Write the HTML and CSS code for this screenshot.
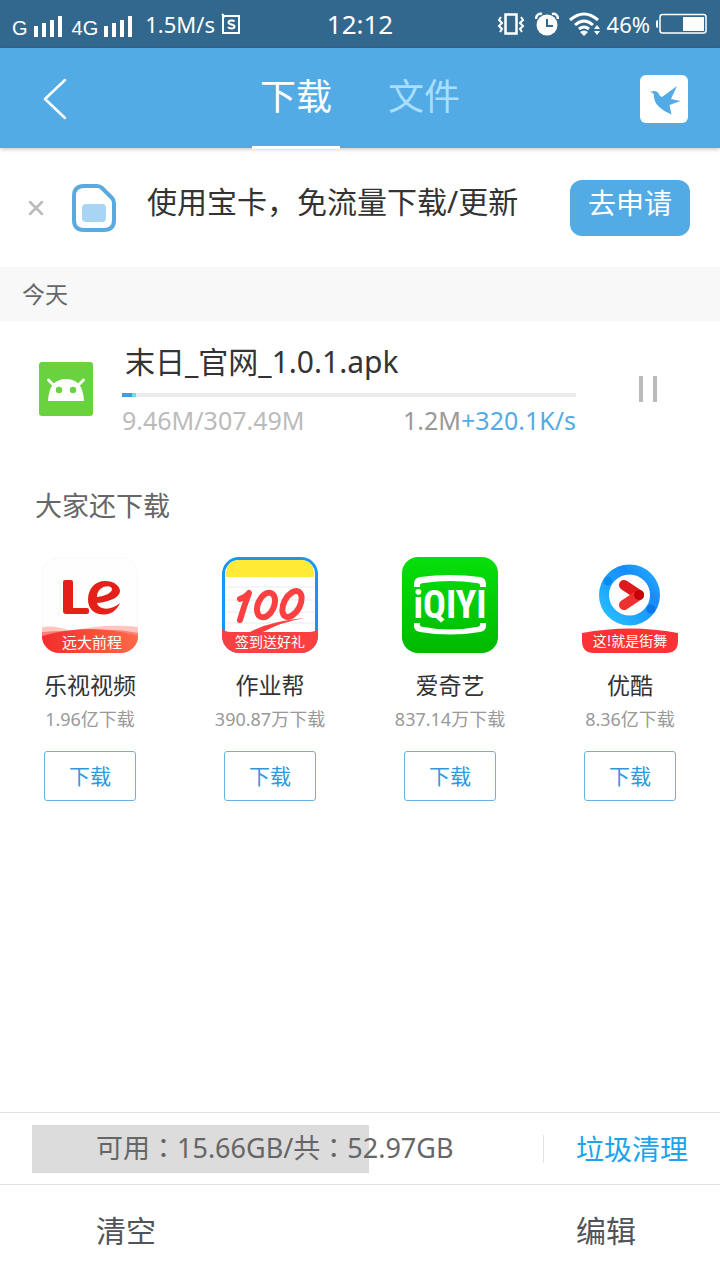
FILE: index.html
```html
<!DOCTYPE html>
<html lang="zh-CN">
<head>
<meta charset="utf-8">
<meta name="viewport" content="width=device-width, initial-scale=1">
<title>下载</title>
<link rel="stylesheet" href="styles.css">
</head>
<body>
<div class="status">
  <div class="status-left">
    <span class="net">G</span>
    <svg class="bars" width="28" height="21" viewBox="0 0 28 21" fill="#fff"><path d="M0 10h4v11H0zM8 7h4v14H8zM16 4h4v17h-4zM24 0h4v21h-4z"/></svg>
    <span class="net net-second">4G</span>
    <svg class="bars" width="28" height="21" viewBox="0 0 28 21" fill="#fff"><path d="M0 10h4v11H0zM8 7h4v14H8zM16 4h4v17h-4zM24 0h4v21h-4z"/></svg>
    <span class="rate">1.5M/s</span>
    <svg width="20" height="22" viewBox="0 0 20 22" fill="none" stroke="#fff" stroke-width="2"><path d="M2 3h16v17H2z"/><path d="M1 1l3 3"/><path d="M13.500 8.500c-1-1.500-6-1.500-6 1s6 1.500 6 4-5 2.500-6.500.5"/></svg>
  </div>
  <time class="clock">12:12</time>
  <div class="status-right">
    <svg width="28" height="24" viewBox="0 0 28 24" fill="none" stroke="#fff" stroke-width="2"><path d="M8.500 2.500h11v19h-11z" stroke-width="2.500"/><path d="M4 5L2 8l3 3-3 3 3 3-2 3M24 5l2 3-3 3 3 3-3 3 2 3"/></svg>
    <svg width="24" height="24" viewBox="0 0 24 24"><circle cx="12" cy="13" r="10.500" fill="#fff"/><path d="M1 7C1 3 4 1 7 2M23 7c0-4-3-6-6-5" fill="none" stroke="#fff" stroke-width="2.500"/><path d="M12 7v7h6" fill="none" stroke="#33688e" stroke-width="2"/></svg>
    <svg width="32" height="24" viewBox="0 0 32 24" fill="none" stroke="#fff" stroke-width="3"><path d="M1 8q14-12 28 0M6 13q9-8 18 0M10 17q5-4 10 0"/><path d="M11 20q4-3 8 0l-4 4zM25 17l3-4 3 4zM25 19l3 4 3-4z" fill="#fff" stroke="none"/></svg>
    <span class="percent">46%</span>
    <svg width="52" height="22" viewBox="0 0 52 22"><rect x="4" y="1.500" width="46" height="18.500" rx="2.500" fill="none" stroke="#fff" stroke-width="1.500"/><path d="M27 4h21v14H27zM0 9q0-2 2-2v8q-2 0-2-2z" fill="#fff"/></svg>
  </div>
</div>

<header class="header">
  <button class="back" aria-label="返回"><svg width="24" height="42" viewBox="0 0 24 42" fill="none" stroke="#fff" stroke-width="2.500" stroke-linecap="round" stroke-linejoin="round"><path d="M22 2L2 21l20 19"/></svg></button>
  <nav class="tabs">
    <a class="tab tab-active" href="#downloads" aria-current="page">下载</a>
    <a class="tab" href="#files">文件</a>
  </nav>
  <button class="bird" aria-label="传输"><svg width="48" height="48" viewBox="0 0 48 48"><path fill="#52abe5" d="M9.500 17l4.500-1q4 0 6 5l2 1 15-11-6 13 9.500 2-11 4 2 9.500Q21 35 16.500 29 13.500 24 14 20q-1-3-4.500-3z"/></svg></button>
</header>

<main class="main" id="downloads">
  <section class="promo">
    <button class="close" aria-label="关闭"><svg width="16" height="16" viewBox="0 0 16 16" stroke="#bbb" stroke-width="2.500" stroke-linecap="round"><path d="M2 2l12 12M14 2L2 14"/></svg></button>
    <svg class="sim" width="44" height="48" viewBox="0 0 44 48"><path d="M12 2h13q3 0 5 2l10 10q2 2 2 5v17q0 10-10 10H12Q2 46 2 36V12Q2 2 12 2z" fill="none" stroke="#5aaae0" stroke-width="4"/><rect x="10" y="20" width="24" height="18" rx="4" fill="#a9d5f5"/></svg>
    <p class="promo-text">使用宝卡，免流量下载/更新</p>
    <button class="apply">去申请</button>
  </section>

  <h2 class="day">今天</h2>

  <article class="task">
    <svg class="apk" width="54" height="54" viewBox="0 0 54 54"><rect width="54" height="54" rx="3" fill="#69d33f"/><path d="M9 39q1-22 18-22t18 22z" fill="#fff"/><path d="M9.500 18l6 6M44.500 18l-6 6" stroke="#fff" stroke-width="3" stroke-linecap="round"/><circle cx="20" cy="28" r="3.200" fill="#69d33f"/><circle cx="34" cy="28" r="3.200" fill="#69d33f"/></svg>
    <div class="task-body">
      <h3 class="file">末日_官网_1.0.1.apk</h3>
      <div class="track" role="progressbar" aria-valuenow="3" aria-valuemin="0" aria-valuemax="100" aria-label="下载进度"><div class="fill" style="width:3%"></div></div>
      <div class="numbers"><span class="size">9.46M/307.49M</span><span class="speed">1.2M<span class="boost">+320.1K/s</span></span></div>
    </div>
    <button class="pause" aria-label="暂停"><svg width="18" height="26" viewBox="0 0 18 26" fill="#bbb"><path d="M0 0h4v26H0zM14 0h4v26h-4z"/></svg></button>
  </article>

  <section class="others">
    <h2 class="others-title">大家还下载</h2>
    <ul class="apps">
      <li class="app">
        <svg width="96" height="96" viewBox="0 0 96 96">
          <defs><linearGradient id="le" x2="1"><stop stop-color="#f32d2c"/><stop offset="1" stop-color="#ff6948"/></linearGradient><clipPath id="round"><rect width="96" height="96" rx="17"/></clipPath></defs>
          <rect x=".5" y=".5" width="95" height="95" rx="17" fill="#fefefe" stroke="#f8f8f8"/>
          <g clip-path="url(#round)"><path d="M0 70q15-2 28 4 36-8 68-4v14H0z" fill="#ffc5bf"/><path d="M0 75q22-2 40 0 28-5 56 1v14H0z" fill="#fb8178"/><path d="M0 79q48-14 96 0v17H0z" fill="url(#le)"/></g>
          <path d="M23 23h6q2 0 2 2v26h14q2 0 2 2v2q0 2-2 2H24q-3 0-3-3V25q0-2 2-2z" fill="#e42018"/>
          <path fill="#e42018" fill-rule="evenodd" d="M78 46c-3 7-9 11.500-16 11.500-10 0-16-6-16-15C46 32 53 24 63 24c9 0 15 5 15 10 0 6-10 11-23 12 2 7 14 8 23 0zM55 40c8-1 15-4 15-8 0-5-15-4-15 8z"/>
          <text class="ribbon ribbon-wide" x="50" y="91">远大前程</text>
        </svg>
        <h3 class="name">乐视视频</h3><p class="count">1.96亿下载</p><button class="get">下载</button>
      </li>
      <li class="app">
        <svg width="96" height="96" viewBox="0 0 96 96">
          <g clip-path="url(#round)"><rect width="96" height="96" fill="#1797f2"/><rect x="3" y="3" width="90" height="90" rx="14" fill="#fff"/><path d="M4 20Q3 3 18 3h60q15 0 14 17z" fill="#ffea36"/><path d="M4 30h88M4 43h88M4 55h88M4 66h88" stroke="#e6edf1"/><path d="M0 72q3 3 9 3h78q6 0 9-3v24H0z" fill="#fb4042"/></g>
          <g fill="none" stroke="#fb4042" stroke-width="6" stroke-linecap="round" stroke-linejoin="round"><path d="M18 42q6-2 9-6-5 13-9 27"/><ellipse cx="44" cy="48" rx="8" ry="13" transform="rotate(24 44 48)"/><ellipse cx="70" cy="47" rx="8" ry="14" transform="rotate(28 70 47)"/></g>
          <path d="M28 75q20-11 55-14-24 4-42 14z" fill="#fb4042"/>
          <text class="ribbon" x="48" y="90">签到送好礼</text>
        </svg>
        <h3 class="name">作业帮</h3><p class="count">390.87万下载</p><button class="get">下载</button>
      </li>
      <li class="app">
        <svg width="96" height="96" viewBox="0 0 96 96">
          <defs><linearGradient id="green" x2="0" y2="1"><stop stop-color="#06df0b"/><stop offset="1" stop-color="#00b900"/></linearGradient></defs>
          <rect width="96" height="96" rx="16" fill="url(#green)"/>
          <path d="M12 30v-3q0-6 6-7 30-4 60 0 6 1 6 7v3h-6q1-4-4-4-26-4-52 0-5 0-4 4zM12 66v3q0 5 6 6 30 5 60 0 6-1 6-6v-3h-6q1 4-4 4-26 5-52 0-5 0-4-4z" fill="#fff"/>
          <text class="iqiyi" x="48" y="61">iQIYI</text>
        </svg>
        <h3 class="name">爱奇艺</h3><p class="count">837.14万下载</p><button class="get">下载</button>
      </li>
      <li class="app">
        <svg width="96" height="96" viewBox="0 0 96 96">
          <defs><linearGradient id="ring" x1="1" x2="0" y2="1"><stop stop-color="#25acff"/><stop offset=".3" stop-color="#168cfb"/><stop offset="1" stop-color="#28c0ff"/></linearGradient></defs>
          <circle cx="47.500" cy="38" r="25.500" fill="#fff" stroke="url(#ring)" stroke-width="10"/><circle cx="26" cy="24" r="4.500" fill="#088bed"/><circle cx="69" cy="52" r="4.500" fill="#0877ea"/>
          <path d="M42 28l15 10" stroke="#e0191d" stroke-width="10" stroke-linecap="round"/><path d="M42 48l15-10" stroke="#ee3033" stroke-width="10" stroke-linecap="round"/><circle cx="57" cy="38" r="5" fill="#c80009"/>
          <path d="M0 76q48-9 96 0v8q0 12-12 12H12Q0 96 0 84z" fill="#fd3236"/>
          <text class="ribbon" x="48" y="89">这!就是街舞</text>
        </svg>
        <h3 class="name">优酷</h3><p class="count">8.36亿下载</p><button class="get">下载</button>
      </li>
    </ul>
  </section>
</main>

<footer class="footer">
  <div class="storage">
    <div class="usage"><span class="usage-text" lang="zh-TW">可用：15.66GB/共：52.97GB</span></div>
    <button class="clean">垃圾清理</button>
  </div>
  <div class="actions"><button class="action">清空</button><button class="action">编辑</button></div>
</footer>
</body>
</html>
```

FILE: styles.css
```css
* { box-sizing: border-box; }
body {
  margin: 0;
  min-height: 100vh;
  display: flex;
  flex-direction: column;
  background: #fff;
  color: #333;
  font-family: "Noto Sans", "Noto Sans CJK SC", sans-serif;
}
h2, h3, p, ul { margin: 0; padding: 0; font-weight: 400; }
button { border: 0; padding: 0; background: none; color: inherit; font: inherit; }
svg { display: block; flex: none; }

.status {
  display: grid;
  grid-template-columns: 1fr auto 1fr;
  align-items: center;
  height: 48px;
  padding: 0 12px;
  background: #33688e;
  color: #fff;
  font-size: 22px;
  line-height: 24px;
}
.status-left, .status-right { display: flex; align-items: center; }
.status-left { gap: 6px; }
.status-right { justify-content: flex-end; gap: 6px; }
.status-right svg + svg { margin-left: 4px; }
.net { padding-top: 8px; font-family: "Liberation Sans", sans-serif; font-size: 20px; }
.net-second { margin-left: 4px; }
.bars { margin-top: 4px; }
.rate { margin-left: 7px; font-size: 22px; }
.clock { font-size: 26px; }

.header {
  display: grid;
  grid-template-columns: 1fr auto 1fr;
  align-items: center;
  height: 100px;
  padding: 0 32px;
  background: #52abe5;
  box-shadow: 0 1px 4px rgba(0, 0, 0, .25);
  color: #fff;
}
.back { justify-self: start; margin-left: 11px; }
.tabs { display: flex; gap: 48px; align-self: stretch; }
.tab {
  padding: 0 8px;
  border-bottom: 3px solid transparent;
  color: #a9defe;
  font-size: 36px;
  line-height: 98px;
  text-decoration: none;
}
.tabs { gap: 40px; }
.tab-active { border-color: #fff; color: #fff; }
.bird { justify-self: end; border-radius: 6px; background: #fff; }

.promo {
  display: flex;
  align-items: center;
  height: 119px;
  padding: 0 30px 0 28px;
}
.sim { margin-left: 28px; }
.promo-text { flex: 1; margin-left: 31px; padding-bottom: 12px; font-size: 30px; line-height: 40px; white-space: nowrap; }
.apply {
  width: 120px;
  height: 56px;
  padding-bottom: 10px;
  border-radius: 12px;
  background: #52abe5;
  color: #fff;
  font-size: 28px;
  line-height: 40px;
}
.day { padding: 0 22px; background: #f8f8f8; color: #666; font-size: 23px; line-height: 54px; }

.task { display: flex; align-items: center; height: 136px; padding: 0 63px 0 39px; }
.task-body { flex: 1; margin: 0 63px 0 29px; }
.file { padding-left: 3px; font-size: 30px; line-height: 40px; }
.track { height: 4px; margin-top: 11px; background: #ececec; }
.fill { height: 4px; background: linear-gradient(90deg, #3f9de5 75%, #5ee8df 75%); }
.numbers { display: flex; justify-content: space-between; margin-top: 7px; font-size: 25px; line-height: 32px; }
.size { color: #bbb; }
.speed { color: #999; }
.boost { color: #52abe5; }

.others-title { padding: 30px 35px 0; color: #666; font-size: 27px; line-height: 38px; }
.apps { display: grid; grid-template-columns: repeat(4, 1fr); margin-top: 32px; list-style: none; }
.app { display: flex; flex-direction: column; align-items: center; }
.name { margin-top: 16px; font-size: 23px; line-height: 32px; }
.count { margin-top: 5px; color: #999; font-size: 18px; line-height: 26px; }
.get {
  width: 92px;
  height: 50px;
  margin-top: 19px;
  padding-bottom: 2px;
  border: 1px solid #6bb2df;
  border-radius: 3px;
  color: #3298dc;
  font-size: 21px;
}
.ribbon { fill: #fff; font: 14px "Noto Sans CJK SC", sans-serif; text-anchor: middle; }
.ribbon-wide { font-size: 15px; }
.iqiyi { fill: #fff; font: 700 38px "Liberation Sans Narrow", "Roboto Condensed", Roboto, sans-serif; text-anchor: middle; }

.footer { margin-top: auto; }
.storage {
  display: flex;
  align-items: center;
  height: 72px;
  padding: 0 32px;
  border-top: 1px solid #e3e3e3;
}
.usage {
  flex: 1;
  padding-left: 64px;
  background: linear-gradient(90deg, #dcdcdc 66%, transparent 66%);
  color: #666;
  font-size: 27px;
  line-height: 46px;
  padding-bottom: 2px;
  white-space: nowrap;
}
.usage-text { font-family: "Noto Sans", "Noto Sans CJK TC", sans-serif; }
.clean { padding-left: 32px; border-left: 1px solid #e3e3e3; color: #1ba4ec; font-size: 28px; line-height: 28px; }
.actions {
  display: flex;
  justify-content: space-between;
  align-items: center;
  height: 96px;
  padding: 0 84px 8px 96px;
  border-top: 1px solid #e3e3e3;
  color: #505458;
  font-size: 30px;
}
```
